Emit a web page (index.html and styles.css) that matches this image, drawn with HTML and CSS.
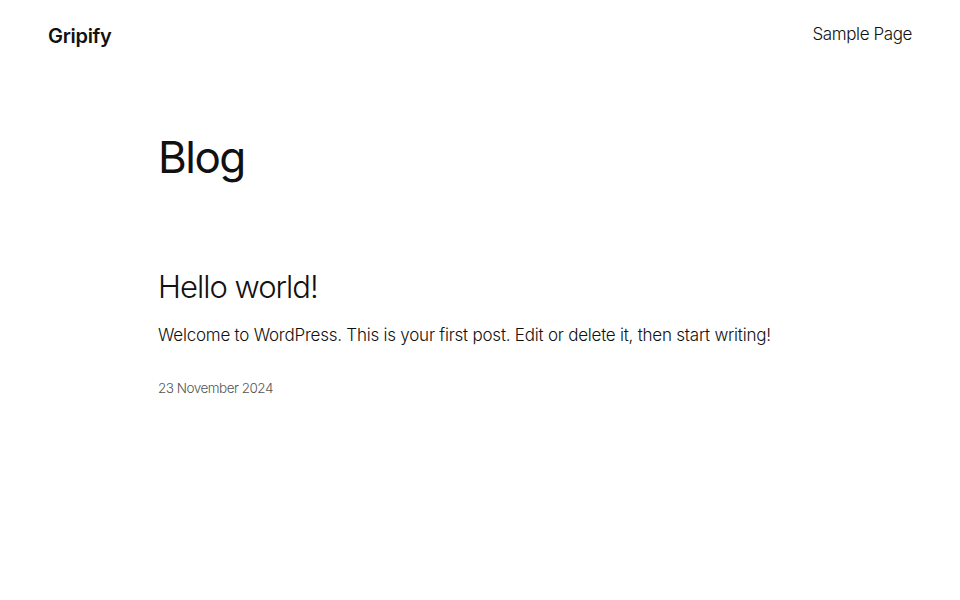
FILE: index.html
```html
<!DOCTYPE html>
<html lang="en">
<head>
<meta charset="utf-8">
<title>Blog – Gripify</title>
<link rel="stylesheet" href="styles.css">
</head>
<body>
<header class="site-header">
  <a class="site-title" href="#">Gripify</a>
  <nav class="site-nav"><a href="#">Sample Page</a></nav>
</header>
<main class="content">
  <h1 class="page-title">Blog</h1>
  <article class="post">
    <h2 class="post-title"><a href="#">Hello world!</a></h2>
    <p class="post-excerpt">Welcome to WordPress. This is your first post. Edit or delete it, then start writing!</p>
    <time class="post-date">23 November 2024</time>
  </article>
</main>
</body>
</html>
```
FILE: styles.css
```css
* { box-sizing: border-box; }
html, body { margin: 0; padding: 0; background: #fff; }
body {
  font-family: Inter, "Noto Sans", sans-serif;
  color: #111111;
}
a { color: inherit; text-decoration: none; }
.site-header {
  display: flex;
  justify-content: space-between;
  align-items: center;
  padding: 15px 48px 0;
  height: 56px;
}
.site-title {
  font-size: 20px;
  font-weight: 600;
  letter-spacing: -0.3px;
  line-height: 28px;
}
.site-nav {
  font-size: 17px;
  font-weight: 300;
  line-height: 24px;
  letter-spacing: -0.4px;
  padding-bottom: 4px;
}
.content {
  max-width: 644px;
  margin: 0 auto;
  padding-top: 73px;
}
.page-title {
  margin: 0;
  font-size: 44px;
  font-weight: 400;
  line-height: 56px;
  letter-spacing: -1.5px;
}
.post { margin-top: 82px; }
.post-title {
  margin: 0;
  font-size: 31px;
  font-weight: 300;
  line-height: 40px;
  letter-spacing: -1px;
}
.post-excerpt {
  margin: 15px 0 0;
  font-size: 17px;
  font-weight: 300;
  line-height: 26px;
  letter-spacing: -0.23px;
}
.post-date {
  display: block;
  margin-top: 30px;
  font-size: 13.5px;
  font-weight: 300;
  line-height: 20px;
  color: #555555;
  letter-spacing: -0.5px;
}
```
